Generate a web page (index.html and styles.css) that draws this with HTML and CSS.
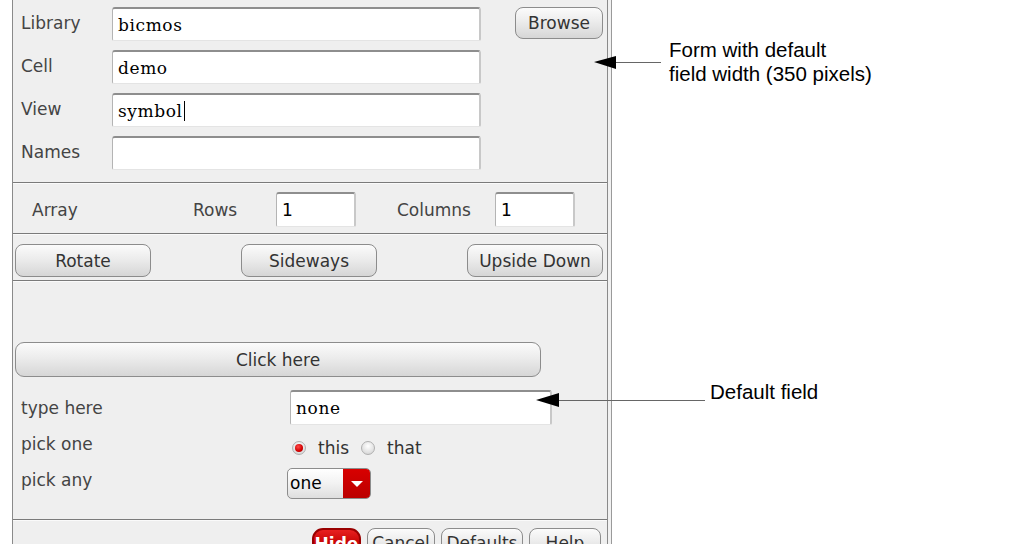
FILE: index.html
```html
<!DOCTYPE html>
<html>
<head>
<meta charset="utf-8">
<link rel="stylesheet" href="styles.css">
</head>
<body>
<div class="page">
  <div class="frame">
    <div class="panel">
      <section class="sec-top">
        <span class="lbl">Library</span>
        <div class="field mono">bicmos</div>
        <button class="btn browse">Browse</button>
        <span class="lbl">Cell</span>
        <div class="field mono">demo</div>
        <span></span>
        <span class="lbl">View</span>
        <div class="field mono">symbol<span class="caret"></span></div>
        <span></span>
        <span class="lbl">Names</span>
        <div class="field mono"></div>
        <span></span>
      </section>
      <section class="sec-array">
        <span class="lbl w-array">Array</span>
        <span class="lbl w-rows">Rows</span>
        <div class="field small">1</div>
        <span class="lbl w-cols">Columns</span>
        <div class="field small">1</div>
      </section>
      <section class="sec-buttons">
        <button class="btn wide">Rotate</button>
        <button class="btn wide">Sideways</button>
        <button class="btn wide">Upside Down</button>
      </section>
      <section class="sec-form">
        <button class="btn click">Click here</button>
        <div class="form-grid">
          <span class="lbl">type here</span>
          <div class="field mono deflt">none</div>
          <span class="lbl">pick one</span>
          <div class="radios">
            <span class="radio on"></span><span class="rlbl">this</span>
            <span class="radio"></span><span class="rlbl">that</span>
          </div>
          <span class="lbl">pick any</span>
          <div class="select"><span class="sel-val">one</span><span class="sel-arrow"></span></div>
        </div>
      </section>
      <section class="sec-footer">
        <button class="btn foot hide">Hide</button>
        <button class="btn foot cancel">Cancel</button>
        <button class="btn foot defaults">Defaults</button>
        <button class="btn foot help">Help</button>
      </section>
    </div>
  </div>

  <div class="note note1">Form with default<br>field width (350 pixels)</div>
  <div class="note note2">Default field</div>
  <svg class="arrows" width="1013" height="544" viewBox="0 0 1013 544">
    <line x1="612" y1="62.5" x2="661" y2="62.5" stroke="#666" stroke-width="1"/>
    <polygon points="594,62 616,56 616,69" fill="#000"/>
    <line x1="556" y1="400.5" x2="705" y2="400.5" stroke="#666" stroke-width="1"/>
    <polygon points="536,400 559,393 559,407" fill="#000"/>
  </svg>
</div>
</body>
</html>
```

FILE: styles.css
```css
* { box-sizing: border-box; }
html, body { margin: 0; padding: 0; background: #fff; }
body { width: 1013px; height: 544px; overflow: hidden; }

.page { position: relative; width: 1013px; height: 544px; }

.frame {
  margin-left: 12px;
  width: 600px;
  height: 544px;
  border-left: 1px solid #8a8a8a;
  border-right: 1px solid #9a9a9a;
  padding-right: 3px;
  background: #f1f1f1;
}
.panel {
  width: 595px;
  height: 544px;
  border-right: 1px solid #8a8a8a;
  background: #efefef;
  font-family: "DejaVu Sans", sans-serif;
  font-size: 17px;
  color: #3c3c3c;
}

.lbl { white-space: nowrap; color: #444; }

.field {
  background: #fff;
  height: 34px;
  border-top: 2px solid #8e8e8e;
  border-left: 1px solid #b4b4b4;
  border-right: 2px solid #c8c8c8;
  border-bottom: 1px solid #e4e4e4;
  border-radius: 3px 3px 2px 2px;
  display: flex;
  align-items: center;
  padding-left: 5px;
  color: #000;
}
.mono { font-family: "DejaVu Serif", serif; font-size: 17px; letter-spacing: 0.6px; }
.caret { display: inline-block; width: 1px; height: 20px; background: #000; margin-left: 1px; }

.btn {
  font-family: "DejaVu Sans", sans-serif;
  font-size: 17px;
  color: #333;
  background: linear-gradient(#fbfbfb, #ececec 45%, #d6d6d6);
  border: 1px solid #8c8c8c;
  border-radius: 8px;
  padding: 0;
  display: flex;
  align-items: center;
  justify-content: center;
}

/* top section */
.sec-top {
  display: grid;
  grid-template-columns: 91px 369px 1fr;
  grid-auto-rows: 34px;
  row-gap: 9px;
  align-items: center;
  padding: 7px 4px 12px 8px;
  border-bottom: 1px solid #7a7a7a;
}
.sec-top .lbl { margin-top: -2px; }
.browse { width: 88px; height: 32px; margin-left: 34px; margin-top: -2px; }

/* array */
.sec-array {
  display: flex;
  align-items: center;
  padding: 8px 0 6px 19px;
  border-top: 1px solid #fafafa;
  border-bottom: 1px solid #7a7a7a;
}
.sec-array .field.small { width: 80px; height: 35px; font-size: 17px; }
.w-array { width: 161px; }
.w-rows { width: 83px; }
.w-cols { width: 98px; margin-left: 41px; }

/* buttons */
.sec-buttons {
  display: flex;
  justify-content: space-between;
  padding: 9px 4px 3px 2px;
  border-top: 1px solid #fafafa;
  border-bottom: 1px solid #7a7a7a;
}
.wide { width: 136px; height: 33px; }

/* form */
.sec-form {
  padding: 60px 0 22px 0;
  border-top: 1px solid #fafafa;
  border-bottom: 1px solid #7a7a7a;
}
.click { width: 526px; height: 35px; margin-left: 2px; border-radius: 9px; }
.form-grid {
  display: grid;
  grid-template-columns: 266px 1fr;
  grid-template-rows: 35px 30px 34px;
  row-gap: 4px;
  align-items: center;
  padding-left: 8px;
  margin-top: 13px;
}
.deflt { width: 262px; height: 35px; margin-left: 3px; }
.radios { display: flex; align-items: center; padding-top: 8px; margin-left: 5px; color: #333; }
.radio {
  width: 14px; height: 14px; border-radius: 50%;
  border: 1px solid #b0b0b0;
  background: radial-gradient(circle at 50% 35%, #fff, #ddd 70%, #c4c4c4);
  display: inline-flex; align-items: center; justify-content: center;
}
.radio.on::after {
  content: ""; width: 8px; height: 8px; border-radius: 50%;
  background: radial-gradient(circle at 40% 35%, #ff4a4a, #d00000 60%, #a00000);
}
.rlbl { margin-left: 12px; margin-right: 12px; }

.select {
  display: flex;
  width: 84px; height: 31px;
  border: 1px solid #8c8c8c;
  border-radius: 5px;
  overflow: hidden;
  margin-top: 6px;
  background: linear-gradient(#fff, #f2f2f2 50%, #dedede);
}
.sel-val { flex: 1; color: #000; display: flex; align-items: center; padding-left: 2px; }
.sel-arrow {
  width: 27px;
  background: linear-gradient(#d80000, #bb0000);
  display: flex; align-items: center; justify-content: center;
}
.sel-arrow::after {
  content: "";
  border-left: 6px solid transparent;
  border-right: 6px solid transparent;
  border-top: 6px solid #fff;
  margin-top: 1px;
}

/* footer */
.sec-footer {
  display: flex;
  justify-content: flex-end;
  gap: 6px;
  padding: 7px 6px 0 0;
  border-top: 1px solid #fafafa;
}
.foot { height: 30px; align-items: flex-start; padding-top: 4px; }
.hide { width: 49px; background: linear-gradient(#e82020, #c00000 60%, #a00000); border: 2px solid #900; color: #fff; font-weight: bold; border-radius: 11px; }
.cancel { width: 68px; }
.defaults { width: 82px; }
.help { width: 72px; }

/* annotations */
.note {
  position: absolute;
  font-family: "Liberation Sans", Arial, sans-serif;
  font-size: 20.5px;
  line-height: 24px;
  color: #000;
}
.note1 { left: 669px; top: 38px; }
.note2 { left: 710px; top: 380px; }
.arrows { position: absolute; left: 0; top: 0; pointer-events: none; }
```
